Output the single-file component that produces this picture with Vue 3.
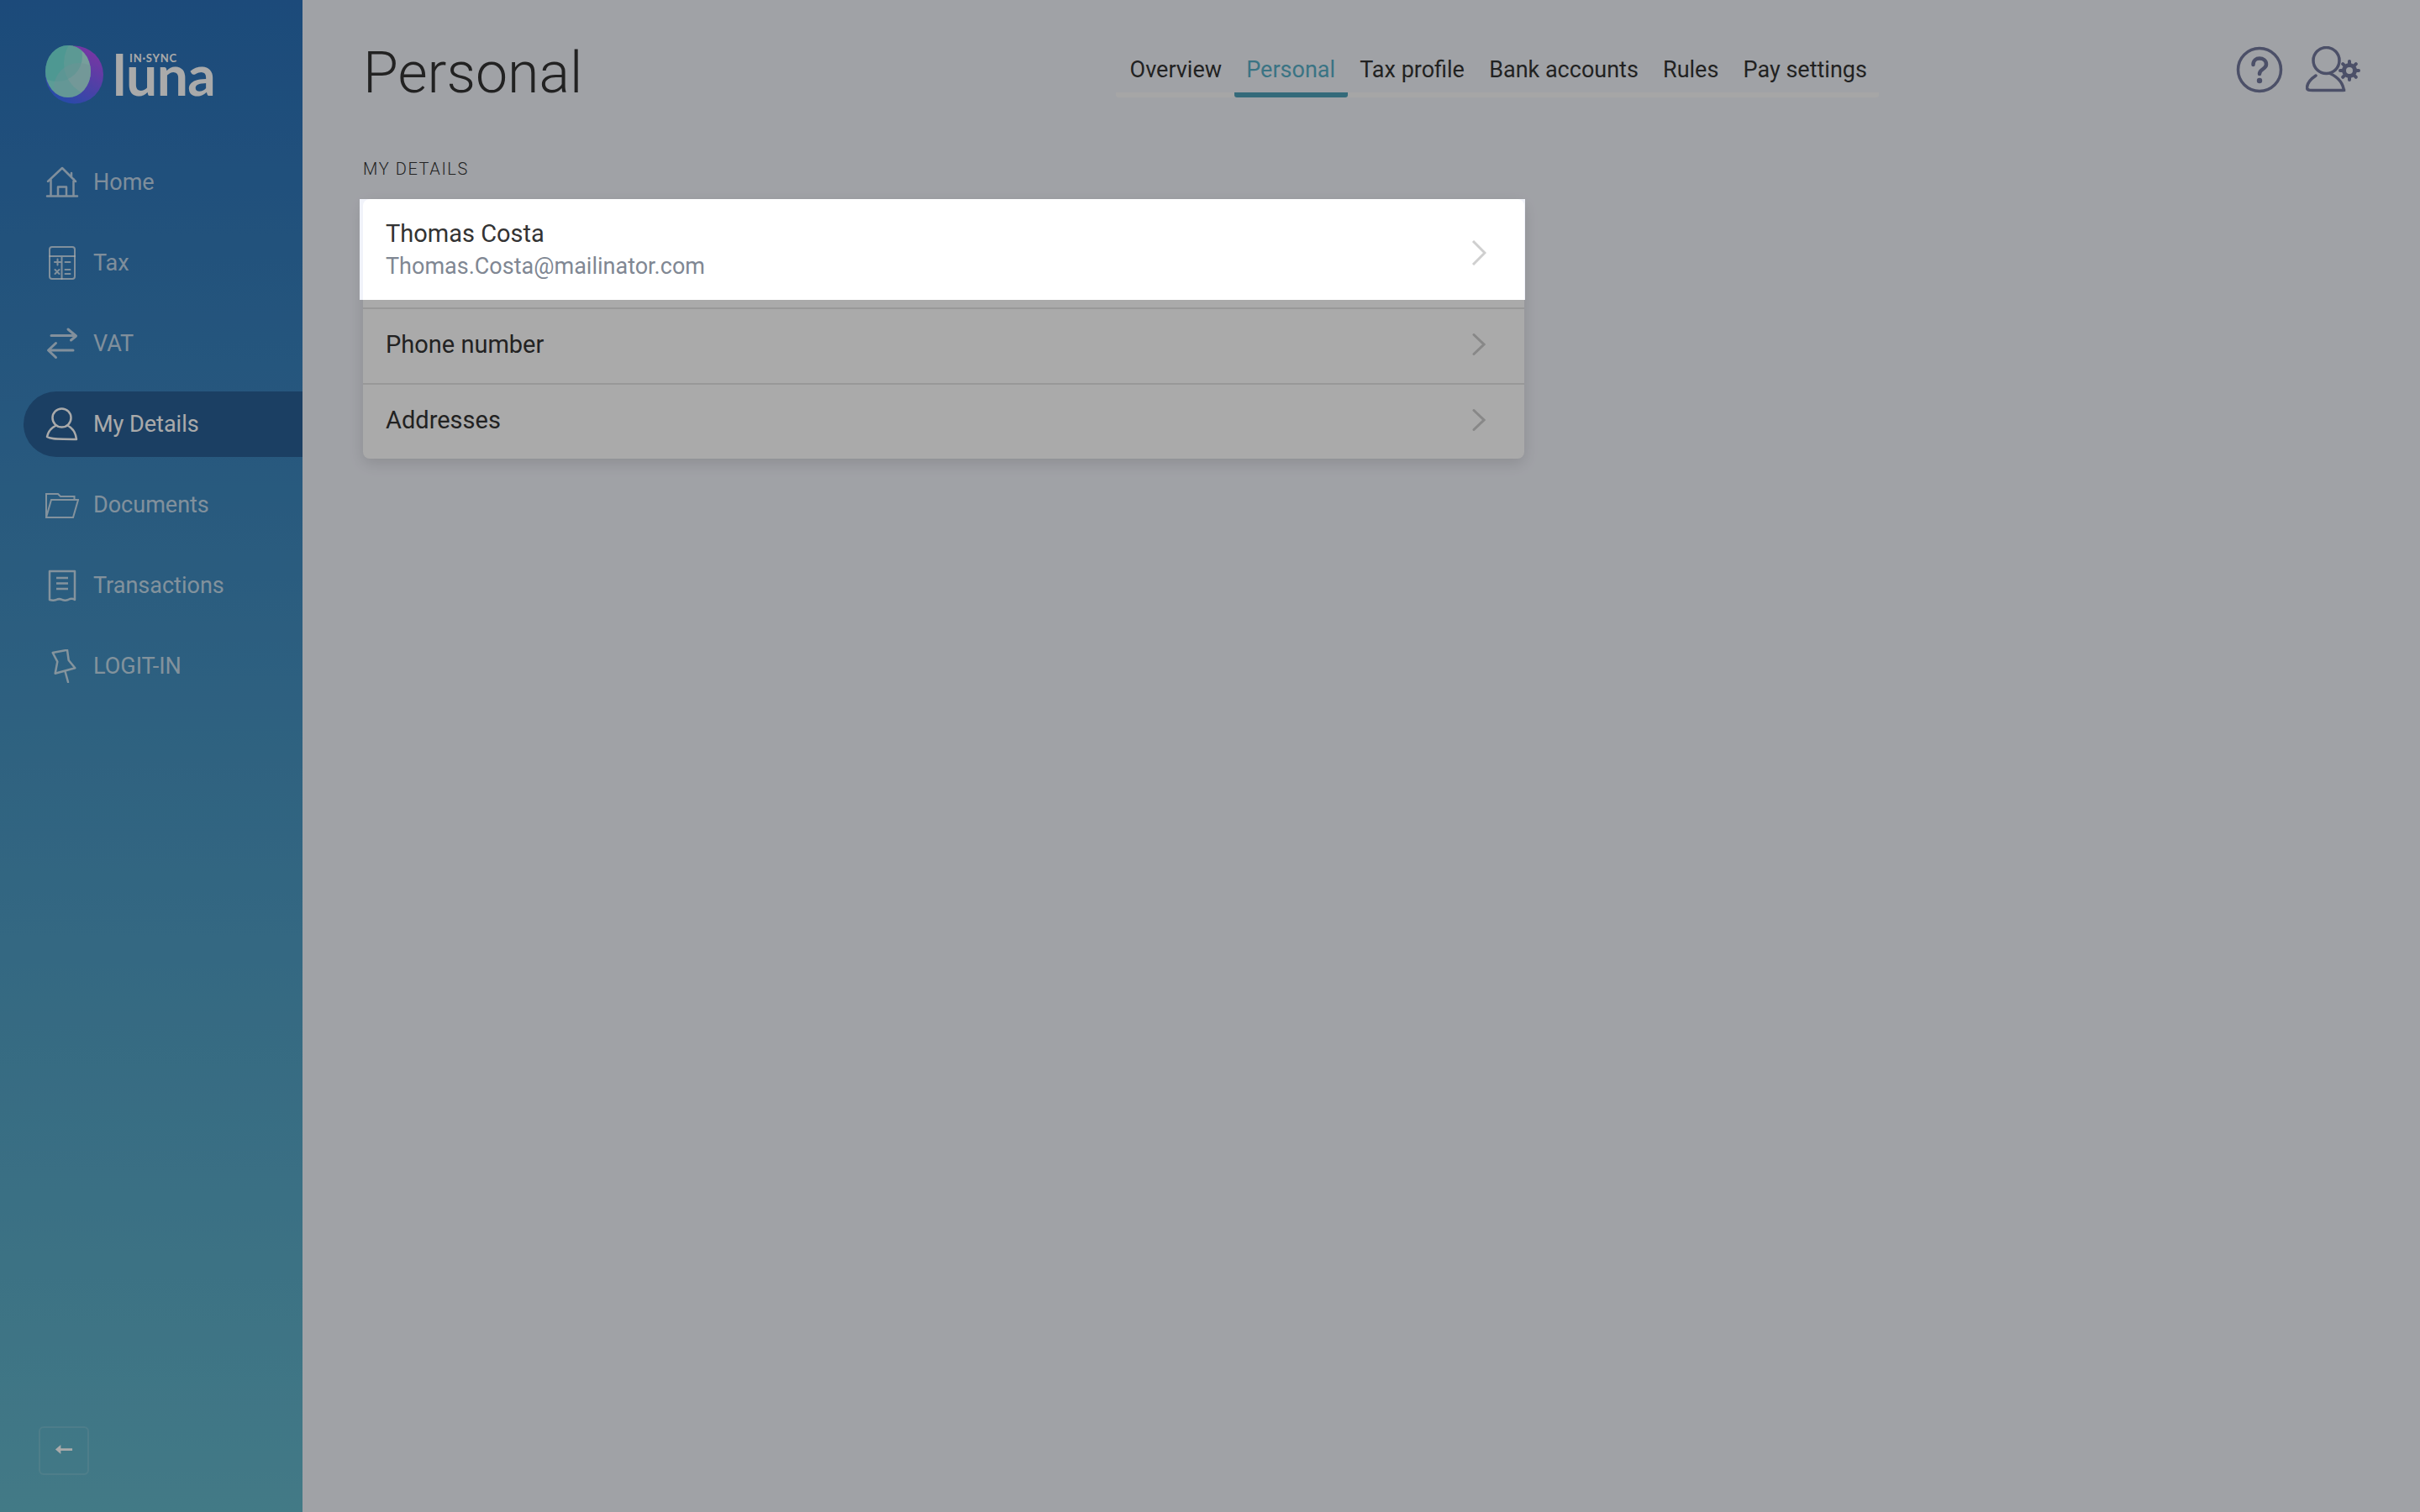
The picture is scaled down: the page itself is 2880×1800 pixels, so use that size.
<script setup>
const navItems = [
  { label: 'Home', icon: 'home' },
  { label: 'Tax', icon: 'tax' },
  { label: 'VAT', icon: 'vat' },
  { label: 'My Details', icon: 'user', active: true },
  { label: 'Documents', icon: 'folder' },
  { label: 'Transactions', icon: 'receipt' },
  { label: 'LOGIT-IN', icon: 'pin' },
]
const tabs = ['Overview', 'Personal', 'Tax profile', 'Bank accounts', 'Rules', 'Pay settings']
</script>

<template>
  <div class="page">
    <aside class="sidebar">
      <div class="logo">
        <svg class="logo-mark" viewBox="0 0 70 72" width="70" height="72">
          <defs>
            <linearGradient id="moon" x1="0.8" y1="0" x2="0.2" y2="1">
              <stop offset="0" stop-color="#bb50f5" />
              <stop offset="1" stop-color="#3372ff" />
            </linearGradient>
            <clipPath id="disc"><ellipse cx="27" cy="32" rx="27" ry="31" /></clipPath>
          </defs>
          <circle cx="34.500" cy="36" r="34.500" fill="url(#moon)" />
          <ellipse cx="27" cy="32" rx="27" ry="31" fill="#8aeae2" />
          <g clip-path="url(#disc)">
            <circle cx="62" cy="22" r="40" fill="#dcefef" fill-opacity="0.5" />
            <circle cx="14" cy="14" r="30" fill="#62e0d6" fill-opacity="0.5" />
            <circle cx="40" cy="52" r="30" fill="#a6dce0" fill-opacity="0.45" />
          </g>
        </svg>
        <div class="wordmark">
          <span class="sync">IN·SYNC</span>
          <span class="luna">luna</span>
        </div>
      </div>

      <nav class="side-nav">
        <a v-for="item in navItems" :key="item.label" class="side-item" :class="{ active: item.active }">
          <svg class="side-icon" viewBox="0 0 40 40" width="40" height="40" fill="none" stroke="currentColor" stroke-width="2.500" stroke-linecap="round" stroke-linejoin="round">
            <g v-if="item.icon === 'home'">
              <path d="M3 19 20 3l16 16M31 13V9M6.500 16v20M33.500 16v20M2 36.500h36M15 36V25.500h10V36" />
            </g>
            <g v-else-if="item.icon === 'tax'" stroke-width="2">
              <rect x="5" y="1" width="30" height="38" rx="3" />
              <path d="M5 12h30M19.500 12v27M11 19h7M14.500 15.500v7M23.500 19h6M11.500 28l5 5M16.500 28l-5 5M23.500 28h6M23.500 33h6" />
            </g>
            <g v-else-if="item.icon === 'vat'" stroke-width="3">
              <path d="M7 10.500h29M27 3l9.500 8-6 5M33 28H4M12.500 19.500 3.500 28l9 8.500" />
            </g>
            <g v-else-if="item.icon === 'user'">
              <circle cx="19.500" cy="12.500" r="11" />
              <path d="M12 22c-6 3-9 8-10 13 6 4 17 2 35 3-1-8-4-13-10-16" />
            </g>
            <g v-else-if="item.icon === 'folder'" stroke-width="2" stroke-linecap="butt" stroke-linejoin="miter">
              <path d="M1 35V7h14l3 3h16.500v4M1 35h32l6-21H7L1 35Z" />
            </g>
            <g v-else-if="item.icon === 'receipt'">
              <path d="M5 3h30v34c-3-2-6-1-8 0-2 .8-5 .8-7 0-2-1-5-1-7 0-2 .8-5 1-8 0V3ZM13 11h14M13 17.500h14M13 24h14" stroke-linecap="butt" />
            </g>
            <g v-else>
              <path d="M8.700 4 26 .8 27.700 13l7.600 9.300-23.600 6.400 2.600-14L8.700 4ZM23.700 27 27 39" />
            </g>
          </svg>
          <span>{{ item.label }}</span>
        </a>
      </nav>

      <button class="collapse" aria-label="Collapse">
        <svg viewBox="0 0 24 14" width="22" height="13">
          <path d="M1 7 8 1v4.500h15v3H8V13L1 7Z" fill="#ffffff" />
        </svg>
      </button>
    </aside>

    <main class="main">
      <header class="top">
        <h1 class="title">Personal</h1>
        <div class="tabs">
          <a v-for="t in tabs" :key="t" class="tab" :class="{ active: t === 'Personal' }">{{ t }}</a>
        </div>
        <div class="actions">
          <svg viewBox="0 0 60 60" width="60" height="60" fill="none" stroke="#72789c" stroke-width="3.500" stroke-linecap="round">
            <circle cx="30" cy="30" r="25.500" />
            <path d="M22.500 24c0-5 3.500-7.500 7.500-7.500s8 2.500 8 7c0 6-8 5.500-8 11.500" stroke-width="4.500" />
            <circle cx="30" cy="43" r="3.200" fill="#72789c" stroke="none" />
          </svg>
          <svg viewBox="0 0 66 56" width="66" height="56" fill="none" stroke="#72789c" stroke-width="3.500" stroke-linecap="round">
            <circle cx="24.500" cy="17" r="15.500" />
            <path d="M12 35C6 39 2 44 1.500 49c0 2 1 3 3 3.200 8 .6 26 .4 41 .4l0 1.400c-.5-8-5-16-16.500-21.500" />
            <g transform="translate(52 29)">
              <circle r="6.500" stroke-width="5" />
              <path d="M0-11V11M-11 0H11M-7.800-7.800 7.800 7.800M7.800-7.800-7.800 7.800" stroke-width="4" stroke-dasharray="4 14" />
            </g>
          </svg>
        </div>
      </header>

      <h2 class="section">MY DETAILS</h2>

      <section class="card">
        <div class="row row-first">
          <div class="spot"><div class="spot-fill"></div></div>
          <div class="row-text">
            <div class="name">Thomas Costa</div>
            <div class="email">Thomas.Costa@mailinator.com</div>
          </div>
          <svg class="chev chev-first" viewBox="0 0 18 30" width="18" height="30" fill="none" stroke="#cfcfcf" stroke-width="3">
            <path d="M2 1l14 14L2 29" />
          </svg>
        </div>
        <div class="row">
          <div class="row-text"><div class="name">Phone number</div></div>
          <svg class="chev" viewBox="0 0 16 26" width="16" height="26" fill="none" stroke="#cccccc" stroke-width="3" stroke-linecap="round">
            <path d="M2 1.500 14 13 2 24.500" />
          </svg>
        </div>
        <div class="row">
          <div class="row-text"><div class="name">Addresses</div></div>
          <svg class="chev" viewBox="0 0 16 26" width="16" height="26" fill="none" stroke="#cccccc" stroke-width="3" stroke-linecap="round">
            <path d="M2 1.500 14 13 2 24.500" />
          </svg>
        </div>
      </section>
    </main>
  </div>
</template>

<style>
html, body { margin: 0; overflow: hidden; }
</style>

<style scoped>
.page {
  display: flex;
  width: 2880px;
  height: 1800px;
  background: #f1f3fa;
  font-family: Roboto, "Liberation Sans", sans-serif;
  font-size: 27px;
  color: #333;
  overflow: hidden;
}
.sidebar {
  width: 360px;
  flex: none;
  display: flex;
  flex-direction: column;
  background: linear-gradient(180deg, #2a70b8 0%, #64b7ca 100%);
}
.logo {
  display: flex;
  height: 178px;
  padding: 53px 0 0 54px;
  box-sizing: border-box;
  gap: 13px;
}
.logo-mark { flex: none; }
.wordmark {
  position: relative;
  width: 120px;
  height: 72px;
  color: #fff;
}
.luna {
  position: absolute;
  left: -3px;
  top: -4px;
  font-family: Lato, sans-serif;
  font-size: 66px;
  font-weight: 700;
  line-height: 80px;
  letter-spacing: -0.5px;
}
.sync {
  position: absolute;
  left: 17px;
  top: 9px;
  font-family: Lato, sans-serif;
  font-size: 13px;
  font-weight: 700;
  letter-spacing: 0.8px;
  line-height: 14px;
  white-space: nowrap;
}
.side-nav {
  display: flex;
  flex-direction: column;
  gap: 18px;
  padding-left: 28px;
  flex: 1;
}
.side-item {
  height: 78px;
  display: flex;
  align-items: center;
  gap: 17px;
  padding-left: 26px;
  border-radius: 39px 0 0 39px;
  color: rgba(255, 255, 255, 0.7);
}
.side-item.active {
  background: #295f95;
  color: #fff;
}
.side-icon { flex: none; }
.collapse {
  width: 60px;
  height: 58px;
  margin: 0 0 44px 46px;
  padding: 0 0 4px;
  display: flex;
  align-items: center;
  justify-content: center;
  background: transparent;
  border: 2px solid rgba(255, 255, 255, 0.13);
  border-radius: 6px;
}
.main {
  flex: 1;
  padding: 0 0 0 72px;
  min-width: 0;
}
.top {
  display: grid;
  grid-template-columns: 896px 908px 1fr;
  height: 168px;
}
.title {
  margin: 0;
  padding-top: 45px;
  font-size: 68px;
  font-weight: 300;
  line-height: 84px;
  color: #333;
}
.tabs {
  display: flex;
  align-self: start;
  margin-top: 60px;
  padding-left: 2px;
  height: 56px;
  background: linear-gradient(#f9f9f9, #f9f9f9) bottom / 100% 6px no-repeat;
  border-radius: 3px;
}
.tab {
  padding: 0 14.600px;
  height: 56px;
  box-sizing: border-box;
  line-height: 46px;
  white-space: nowrap;
  color: #333;
}
.tab.active {
  color: #57aec6;
  border-bottom: 6px solid #4f9fb7;
  border-radius: 3px;
}
.actions {
  display: flex;
  align-items: center;
  gap: 25px;
  padding: 0 0 0 423px;
  align-self: start;
  margin-top: 53px;
}
.section {
  margin: 0;
  padding-top: 21px;
  font-size: 20px;
  font-weight: 300;
  letter-spacing: 1.600px;
  line-height: 24px;
  color: #333;
}
.card {
  width: 1382px;
  margin-top: 24px;
  background: #fff;
  border-radius: 8px;
  box-shadow: 0 6px 18px rgba(0, 0, 0, 0.12);
}
.row {
  position: relative;
  display: flex;
  justify-content: space-between;
  align-items: flex-start;
  padding: 22px 46px 26px 27px;
  height: 88px;
  box-sizing: border-box;
}
.row + .row { height: 90px; border-top: 2px solid #e4e4e4; }
.row-first { height: 129px; padding-top: 21px; }
.spot {
  position: absolute;
  left: -4px;
  right: -1px;
  top: 0;
  height: 120px;
  z-index: 1;
  background: #f1f3fa;
  box-shadow: 0 0 0 4000px rgba(0, 0, 0, 0.333);
}
.spot-fill {
  height: 100%;
  margin: 0 1px 0 4px;
  background: #fff;
  border-radius: 8px 8px 0 0;
}
.name { font-size: 29px; line-height: 40px; color: #333; }
.email { line-height: 38px; color: #808793; }
.chev { margin-top: 7px; }
.row-first .row-text,
.row-first .chev { position: relative; z-index: 2; }
.chev-first { margin-top: 28px; margin-right: -1px; }
</style>
